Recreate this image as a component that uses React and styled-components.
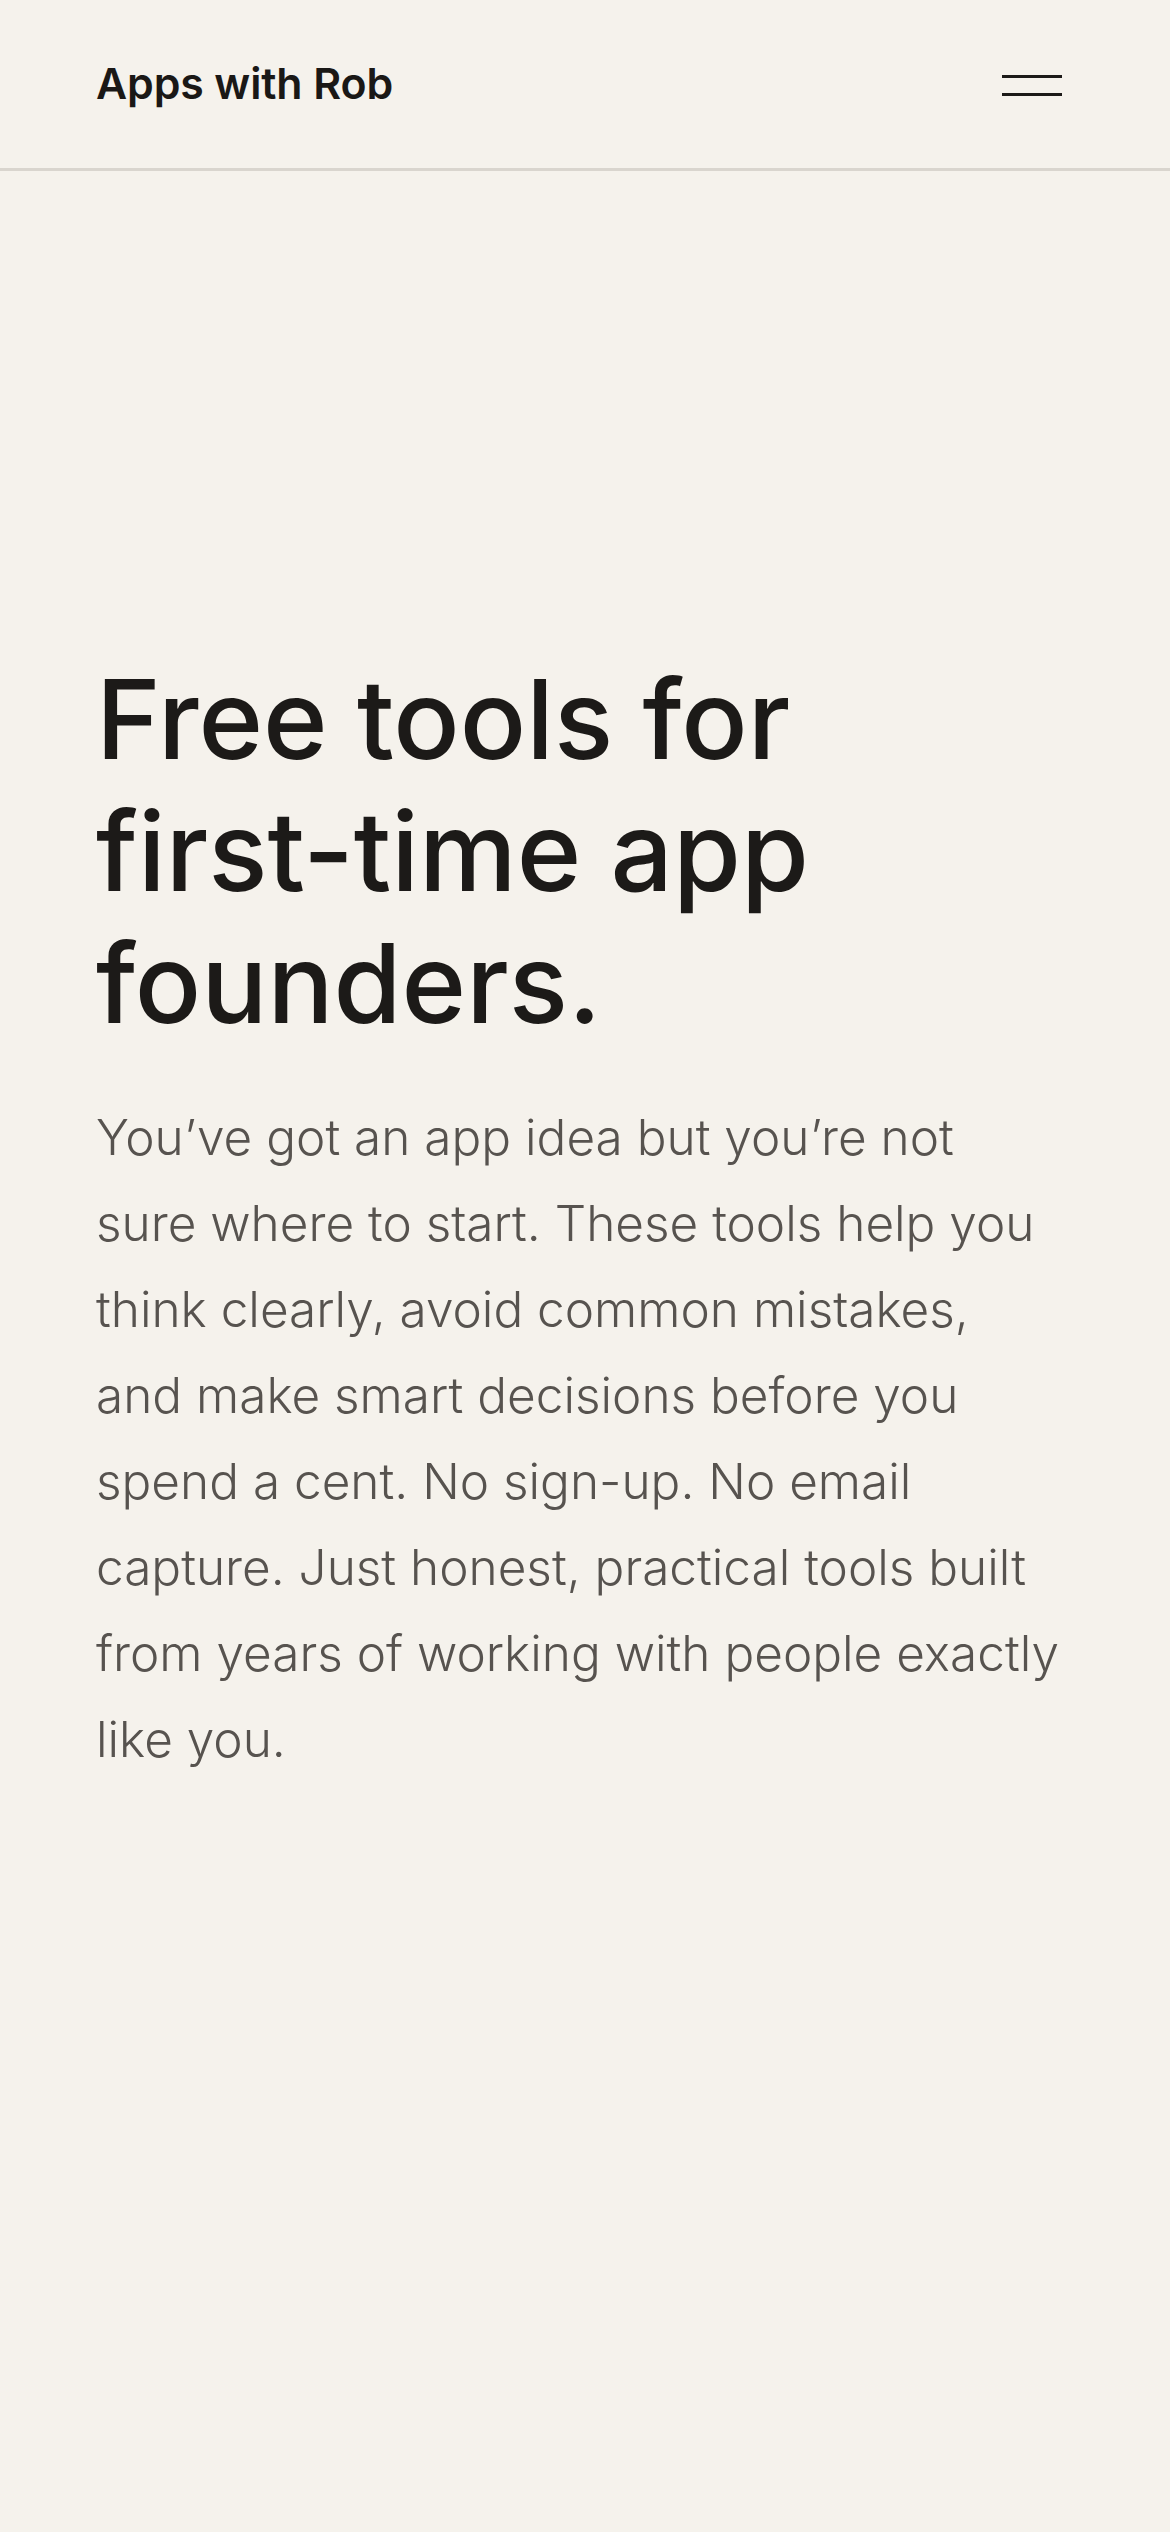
import React from "react";
import styled, { createGlobalStyle } from "styled-components";

const GlobalStyle = createGlobalStyle`
  *, *::before, *::after { box-sizing: border-box; }
  html, body {
    margin: 0;
    padding: 0;
    background: #f5f2ec;
    color: #1c1a18;
    font-family: Inter, "Noto Sans", sans-serif;
    -webkit-font-smoothing: antialiased;
  }
  #root { min-height: 100vh; background: #f5f2ec; }
`;

const Page = styled.div`
  min-height: 100vh;
  display: flex;
  flex-direction: column;
  background: #f5f2ec;
`;

const Header = styled.header`
  height: 171px;
  display: flex;
  align-items: center;
  justify-content: space-between;
  padding: 0 96px;
  border-bottom: 3px solid #d9d5ce;
`;

const Logo = styled.a`
  font-family: Inter, sans-serif;
  font-size: 42.8px;
  font-weight: 600;
  line-height: 1;
  color: #1a1816;
  text-decoration: none;
  letter-spacing: -0.1px;
`;

const MenuButton = styled.button`
  display: flex;
  flex-direction: column;
  gap: 15px;
  padding: 12px;
  margin-top: 3px;
  background: none;
  border: 0;
  cursor: pointer;
`;

const MenuLine = styled.span`
  display: block;
  width: 60px;
  height: 3px;
  background: #1c1a18;
`;

const Hero = styled.main`
  display: flex;
  flex-direction: column;
  gap: 45px;
  padding: 482px 96px 200px;
`;

const Title = styled.h1`
  margin: 0;
  font-family: Inter, sans-serif;
  font-size: 110px;
  font-weight: 500;
  line-height: 132px;
  letter-spacing: 0;
  color: #1c1a18;
`;

const Lead = styled.p`
  margin: 0;
  max-width: 968px;
  font-family: Inter, sans-serif;
  font-size: 49.5px;
  font-weight: 300;
  line-height: 86px;
  color: #57534f;
`;

export default function App() {
  return (
    <>
      <GlobalStyle />
      <Page>
        <Header>
          <Logo href="#">Apps with Rob</Logo>
          <MenuButton aria-label="Open menu">
            <MenuLine />
            <MenuLine />
          </MenuButton>
        </Header>
        <Hero>
          <Title>
            Free tools for first-time app founders.
          </Title>
          <Lead>
            You’ve got an app idea but you’re not sure where to start. These
            tools help you think clearly, avoid common mistakes, and make smart
            decisions before you spend a cent. No sign-up. No email capture.
            Just honest, practical tools built from years of working with
            people exactly like you.
          </Lead>
        </Hero>
      </Page>
    </>
  );
}
